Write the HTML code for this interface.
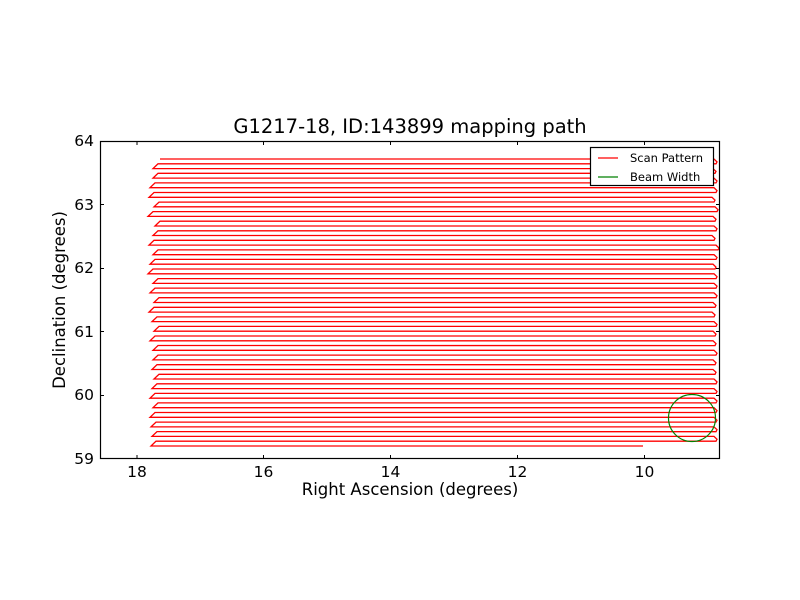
<!DOCTYPE html>
<html><head><meta charset="utf-8"><style>
html,body{margin:0;padding:0;background:#fff;width:800px;height:600px;overflow:hidden}
svg{display:block}
text{font-family:"DejaVu Sans","Liberation Sans",sans-serif;fill:#000}
</style></head><body>
<svg width="800" height="600" viewBox="0 0 800 600" xmlns="http://www.w3.org/2000/svg">
<rect width="800" height="600" fill="#fff"/>
<text x="410" y="133" font-size="19.5" text-anchor="middle">G1217-18, ID:143899 mapping path</text>
<g id="scan"></g>
<circle cx="692" cy="418" r="23.5" fill="none" stroke="#008000" stroke-width="1.2"/>
<rect x="100.5" y="141.5" width="619" height="317" fill="none" stroke="#000" stroke-width="1.2"/>
<g stroke="#000" stroke-width="1">
<line x1="137" y1="459" x2="137" y2="455"/><line x1="137" y1="141" x2="137" y2="145"/>
<line x1="263.5" y1="459" x2="263.5" y2="455"/><line x1="263.5" y1="141" x2="263.5" y2="145"/>
<line x1="390.5" y1="459" x2="390.5" y2="455"/><line x1="390.5" y1="141" x2="390.5" y2="145"/>
<line x1="517.5" y1="459" x2="517.5" y2="455"/><line x1="517.5" y1="141" x2="517.5" y2="145"/>
<line x1="644.5" y1="459" x2="644.5" y2="455"/><line x1="644.5" y1="141" x2="644.5" y2="145"/>
<line x1="100" y1="204.5" x2="104" y2="204.5"/><line x1="720" y1="204.5" x2="716" y2="204.5"/>
<line x1="100" y1="268.5" x2="104" y2="268.5"/><line x1="720" y1="268.5" x2="716" y2="268.5"/>
<line x1="100" y1="331.5" x2="104" y2="331.5"/><line x1="720" y1="331.5" x2="716" y2="331.5"/>
<line x1="100" y1="395.5" x2="104" y2="395.5"/><line x1="720" y1="395.5" x2="716" y2="395.5"/>
</g>
<g font-size="15.5" text-anchor="middle">
<text x="137" y="477">18</text><text x="263.5" y="477">16</text><text x="390.5" y="477">14</text><text x="517.5" y="477">12</text><text x="644.5" y="477">10</text>
</g>
<g font-size="15.5" text-anchor="end">
<text x="94" y="146">64</text><text x="94" y="210">63</text><text x="94" y="273">62</text><text x="94" y="337">61</text><text x="94" y="400">60</text><text x="94" y="464">59</text>
</g>
<text x="410" y="495" font-size="16.5" text-anchor="middle">Right Ascension (degrees)</text>
<text transform="translate(65,300) rotate(-90)" font-size="16.5" text-anchor="middle">Declination (degrees)</text>
<rect x="590.5" y="147.5" width="123" height="38" fill="#fff" stroke="#000" stroke-width="1.2"/>
<line x1="598" y1="158" x2="618" y2="158" stroke="#f00" stroke-width="1.2"/>
<line x1="598" y1="177" x2="618" y2="177" stroke="#008000" stroke-width="1.2"/>
<text x="630" y="162" font-size="11.5">Scan Pattern</text>
<text x="630" y="181" font-size="11.5">Beam Width</text>
</svg>
<script>
(function(){
var g=document.getElementById('scan');
var n=61,y0=159,y1=446,d=(y1-y0)/(n-1);
var lefts=[155,153,151,153,152,150,151,149,153,154,150,148,152,155,154,153,150,149,151,153,152,150,149,148,150,153,151,150,152,154,151,149,150,152,153,154,152,150,151,153,152,153,150,152,151,154,153,152,151,150,152,153,151,150,152,151,153,152,150,151,152];
var rights=[716,717,715,718,716,715,716,718,714,715,717,716,715,718,716,715,714,716,718,715,716,717,715,714,716,718,716,715,716,717,715,716,714,715,716,717,715,716,715,714,716,717,715,716,715,714,716,717,716,715,716,717,716,715,716,717,716,715,716,717,716];
var p='M160 '+y0;var dir=1;
for(var i=0;i<n;i++){
var y=y0+i*d;
if(dir>0){var xr=rights[i]; if(i==n-1)xr=645; p+=' L'+(xr-2)+' '+y.toFixed(1); if(i<n-1)p+=' L'+(xr+1)+' '+(y+d*0.6).toFixed(1)+' L'+(xr)+' '+(y+d).toFixed(1);}
else{var xl=lefts[i]; p+=' L'+(xl+5)+' '+y.toFixed(1); if(i<n-1)p+=' L'+xl+' '+(y+d).toFixed(1);}
dir=-dir;}
var ns='http://www.w3.org/2000/svg';var e=document.createElementNS(ns,'path');
e.setAttribute('d',p);e.setAttribute('fill','none');e.setAttribute('stroke','#f00');e.setAttribute('stroke-width','1.3');e.setAttribute('stroke-linejoin','miter');
g.appendChild(e);
})();
</script>
</body></html>
